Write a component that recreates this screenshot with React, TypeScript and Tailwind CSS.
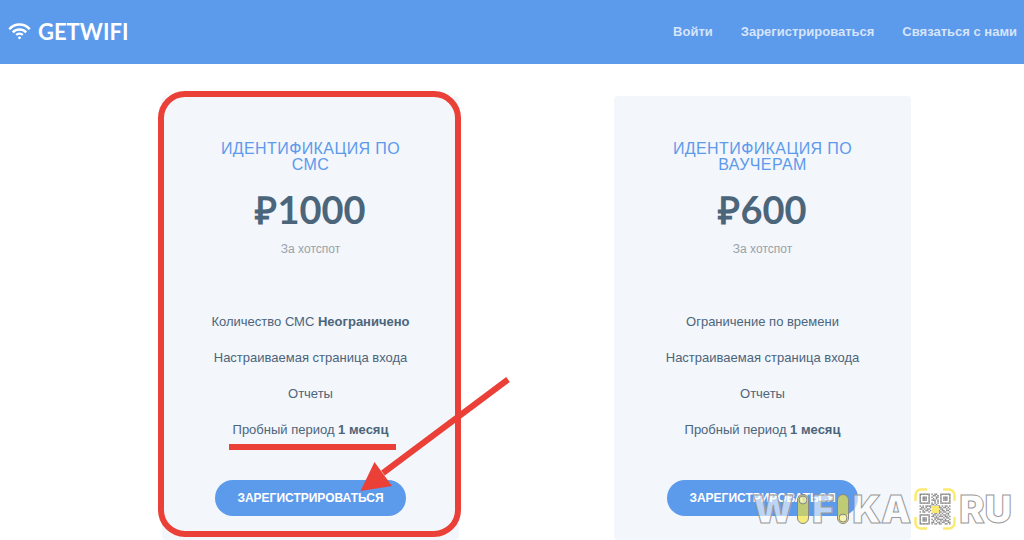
import React from 'react';

interface Feature {
  label: string;
  strong?: string;
  underlined?: boolean;
}

interface Plan {
  id: string;
  title: string;
  price: string;
  features: Feature[];
  highlighted?: boolean;
}

const NAV_LINKS = ['Войти', 'Зарегистрироваться', 'Связаться с нами'];

const PLANS: Plan[] = [
  {
    id: 'sms',
    title: 'Идентификация по СМС',
    price: '₽1000',
    highlighted: true,
    features: [
      { label: 'Количество СМС', strong: 'Неограничено' },
      { label: 'Настраиваемая страница входа' },
      { label: 'Отчеты' },
      { label: 'Пробный период', strong: '1 месяц', underlined: true },
    ],
  },
  {
    id: 'voucher',
    title: 'Идентификация по ваучерам',
    price: '₽600',
    features: [
      { label: 'Ограничение по времени' },
      { label: 'Настраиваемая страница входа' },
      { label: 'Отчеты' },
      { label: 'Пробный период', strong: '1 месяц' },
    ],
  },
];

const QR_ROWS = [
  '111111101011001111111',
  '100000100110101000001',
  '101110101001101011101',
  '101110100101001011101',
  '101110101110101011101',
  '100000100010101000001',
  '111111101010101111111',
  '000000001101000000000',
  '101011110010110101101',
  '011010010000011011010',
  '110101100000001100101',
  '001011010000010110110',
  '101100100000011011001',
  '000000001011010100110',
  '111111100110101011010',
  '100000101101011101101',
  '101110100011100010110',
  '101110101010111101001',
  '101110100101001011110',
  '100000101100110110011',
  '111111101011011001101',
];

const WifiIcon: React.FC = () => (
  <svg className="h-[18px] w-[23px]" viewBox="0 0 23 18" fill="none" stroke="currentColor" strokeWidth="2.5" aria-hidden="true">
    <path d="M1.300 6.200a13.500 13.500 0 0 1 20.400 0" />
    <path d="M4.800 9.300a9.300 9.300 0 0 1 13.400 0" />
    <path d="M8.200 11.900a5 5 0 0 1 6.600 0" />
    <circle cx="11.500" cy="14.800" r="1.400" fill="currentColor" stroke="none" />
  </svg>
);

const Header: React.FC = () => (
  <header className="flex h-16 items-center justify-between bg-[#5c9aeb] pl-2 pr-[7px] text-white">
    <a href="#" className="flex items-center gap-[7px]">
      <WifiIcon />
      <span className="font-[Lato,sans-serif] text-[22px] leading-6 font-bold">GETWIFI</span>
    </a>
    <nav className="flex gap-7 text-[13px] leading-5 font-bold text-white/75">
      {NAV_LINKS.map(link => (
        <a key={link} href="#">{link}</a>
      ))}
    </nav>
  </header>
);

const Arrow: React.FC = () => (
  <svg className="pointer-events-none absolute -right-[52px] bottom-12 h-[115px] w-[152px]" viewBox="0 0 152 115" aria-hidden="true">
    <path d="M149 2.500 24 96" stroke="#ea4037" strokeWidth="6" />
    <path d="M1.500 114 15.500 85 33 109Z" fill="#ea4037" />
  </svg>
);

const PlanCard: React.FC<{ plan: Plan }> = ({ plan }) => (
  <section className="relative rounded bg-[#f3f6fb] px-10 pt-[45px] pb-6 text-center">
    <h2 className="text-base leading-4 uppercase tracking-wide text-[#5c9aeb]">{plan.title}</h2>
    <p className="mt-4 font-[Lato,sans-serif] text-[38px] leading-10 font-bold text-[#4b657b]">{plan.price}</p>
    <p className="mt-3 text-xs text-[#98a2a8]">За хотспот</p>
    <ul className="mt-[47px] -mx-4 text-[13px] leading-5 text-[#4b657b]">
      {plan.features.map(feature => (
        <li key={feature.label} className="py-2">
          <span className="relative inline-block">
            {feature.label}
            {feature.strong && <b> {feature.strong}</b>}
            {feature.underlined && <span className="absolute -left-1 -right-2 top-6 h-[6px] bg-[#ea4037]" />}
          </span>
        </li>
      ))}
    </ul>
    <button type="button" className="mt-8 h-9 rounded-full bg-[#5c9aeb] px-[22px] text-xs font-bold text-white uppercase">
      Зарегистрироваться
    </button>
    {plan.highlighted && (
      <>
        <div className="pointer-events-none absolute -top-[5px] -right-[2px] bottom-[3px] -left-1 rounded-[27px] border-[6px] border-[#ea4037]" />
        <Arrow />
      </>
    )}
  </section>
);

// Letter "I" of the logo, a pill with a dot at one of its ends
const LogoPill: React.FC<{ dotY: number }> = ({ dotY }) => (
  <svg className="h-[30px] w-3" viewBox="0 0 12 30" stroke="#888" strokeWidth="1" aria-hidden="true">
    <rect x="0.500" y="0.500" width="11" height="29" rx="5.500" fill="#f5e535" fillOpacity="0.65" />
    <circle cx="6" cy={dotY} r="4" fill="#fff" fillOpacity="0.4" />
  </svg>
);

const QrCode: React.FC = () => (
  <svg className="h-[42px] w-[42px]" viewBox="0 0 42 42" aria-hidden="true">
    <rect x="4" y="4" width="34" height="34" fill="#fff" fillOpacity="0.6" />
    <path
      d="M1.500 13V7a5.500 5.500 0 0 1 5.500-5.500h6M29 1.500h6A5.500 5.500 0 0 1 40.500 7v6M40.500 29v6a5.500 5.500 0 0 1-5.500 5.500h-6M13 40.500H7A5.500 5.500 0 0 1 1.500 35v-6"
      fill="none" stroke="#fbea72" strokeWidth="2.500"
    />
    <g transform="translate(5.500 5.500) scale(1.480)" fill="#8b8b8b">
      {QR_ROWS.map((row, y) =>
        row.split('').map((cell, x) => cell === '1' && <rect key={`${x}-${y}`} x={x} y={y} width="1" height="1" />)
      )}
    </g>
    <path d="M18 18h7v7h-7z" fill="#fbea72" />
  </svg>
);

const Watermark: React.FC = () => (
  <div className="pointer-events-none absolute right-3 bottom-[10px] flex items-center gap-[3px] font-[Inter,sans-serif] text-[38px] leading-[42px] font-black text-white/60 [-webkit-text-stroke:1px_#999]">
    <span>W</span>
    <LogoPill dotY={6} />
    <span>F</span>
    <LogoPill dotY={24} />
    <span>KA</span>
    <QrCode />
    <span>RU</span>
  </div>
);

const App: React.FC = () => (
  <div className="relative min-h-screen bg-white font-['Liberation_Sans',Arial,sans-serif]">
    <Header />
    <main className="grid grid-cols-2 gap-[155px] pt-8 pr-[113px] pl-[162px]">
      {PLANS.map(plan => (
        <PlanCard key={plan.id} plan={plan} />
      ))}
    </main>
    <Watermark />
  </div>
);

export default App;
